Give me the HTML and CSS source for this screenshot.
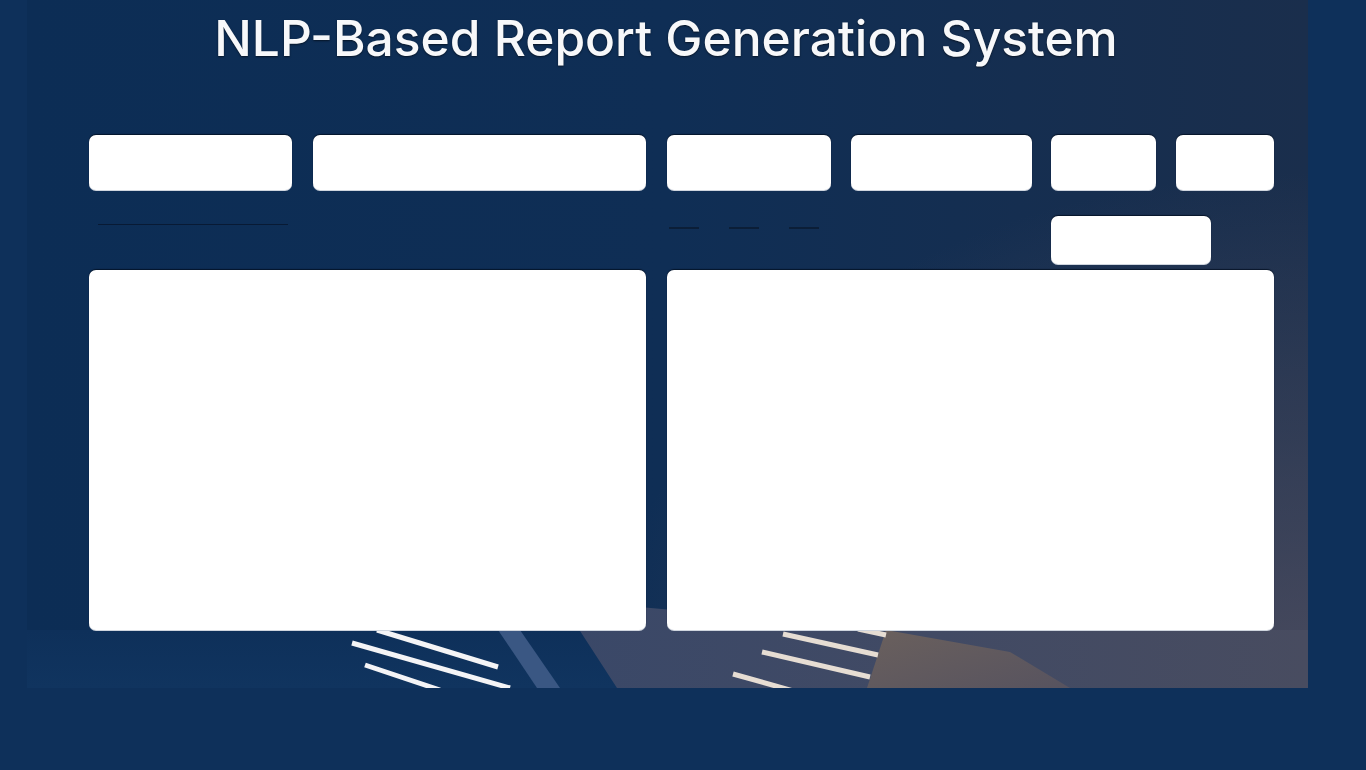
FILE: index.html
```html
<!DOCTYPE html>
<html lang="en">
<head>
<meta charset="utf-8">
<title>NLP-Based Report Generation System</title>
<link rel="stylesheet" href="styles.css">
</head>
<body>
<div class="frame">
  <svg class="art" width="1281" height="688" viewBox="27 0 1281 688" aria-hidden="true">
    <defs>
      <linearGradient id="grey" x1="0" y1="0" x2="1" y2="0">
        <stop offset="0" stop-color="#3a4868"/>
        <stop offset="1" stop-color="#484c60"/>
      </linearGradient>
      <linearGradient id="tan" x1="0" y1="0" x2="1" y2="1">
        <stop offset="0" stop-color="#6a605d"/>
        <stop offset="1" stop-color="#57535f"/>
      </linearGradient>
      <linearGradient id="bluefloor" x1="0" y1="0" x2="0" y2="1">
        <stop offset="0" stop-color="#0e305a"/>
        <stop offset="1" stop-color="#10345f"/>
      </linearGradient>
    </defs>
    <rect x="27" y="630" width="600" height="58" fill="url(#bluefloor)"/>
    <polygon points="560,600 900,630 1308,630 1308,688 617,688" fill="url(#grey)"/>
    <polygon points="886,630 1010,652 1070,688 867,688" fill="url(#tan)"/>
    <polygon points="498,630 520,630 560,688 537,688" fill="#3a5783"/>
    <g stroke="#f4f4f6" stroke-width="5">
      <line x1="377" y1="630" x2="498" y2="667"/>
      <line x1="352" y1="643" x2="510" y2="688"/>
      <line x1="365" y1="665" x2="440" y2="690"/>
    </g>
    <g stroke="#e6ddd3" stroke-width="5">
      <line x1="783" y1="634" x2="878" y2="655"/>
      <line x1="762" y1="652" x2="870" y2="677"/>
      <line x1="733" y1="674" x2="797" y2="692"/>
      <line x1="858" y1="629" x2="886" y2="635"/>
    </g>
  </svg>

  <h1 class="title">NLP-Based Report Generation System</h1>

  <div class="toolbar">
    <div class="box w1"></div>
    <div class="box w2"></div>
    <div class="box w3"></div>
    <div class="box w4"></div>
    <div class="box w5"></div>
    <div class="box w6"></div>
  </div>

  <div class="subrow">
    <div class="sub-left"><span class="rule"></span></div>
    <div class="sub-right">
      <span class="dashes"></span>
      <div class="box action"></div>
    </div>
  </div>

  <div class="panels">
    <div class="box panel-left"></div>
    <div class="box panel-right"></div>
  </div>
</div>
</body>
</html>
```

FILE: styles.css
```css
html, body {
  margin: 0;
  padding: 0;
}

body {
  background: #0e305a;
  width: 1366px;
  height: 770px;
  overflow: hidden;
  font-family: Inter, "Noto Sans", sans-serif;
}

.frame {
  position: relative;
  margin-left: 27px;
  width: 1281px;
  height: 688px;
  box-sizing: border-box;
  padding: 0 34px 0 62px;
  display: flex;
  flex-direction: column;
  background:
    radial-gradient(ellipse 55% 75% at 100% 100%, rgba(88, 84, 100, 0.75), rgba(88, 84, 100, 0) 100%),
    linear-gradient(to right, #0c2d55 0%, #0f2e55 50%, #1a2e4c 100%);
}

.art {
  position: absolute;
  left: 0;
  top: 0;
  z-index: 0;
}

.title,
.toolbar,
.subrow,
.panels {
  position: relative;
  z-index: 1;
}

.title {
  margin: 0 -34px 0 -62px;
  height: 135px;
  box-sizing: border-box;
  padding-top: 8px;
  padding-right: 3px;
  text-align: center;
  color: #f7f8fa;
  font-size: 49.7px;
  font-weight: 500;
  line-height: 60px;
  letter-spacing: 0;
  text-shadow: 0 1px 2px rgba(0, 0, 0, 0.55);
}

.box {
  background: #ffffff;
  border-radius: 7px;
  box-shadow: 0 -1px 1px rgba(2, 12, 30, 0.75), 0 1px 0 #cfd5de;
}

.toolbar {
  display: flex;
  height: 55px;
}

.w1 { width: 203px; }
.w2 { width: 333px; margin-left: 21px; }
.w3 { width: 164px; margin-left: 21px; }
.w4 { width: 181px; margin-left: 20px; }
.w5 { width: 105px; margin-left: 19px; }
.w6 { width: 98px;  margin-left: 20px; }

.subrow {
  display: flex;
  height: 80px;
}

.sub-left {
  width: 557px;
  padding-top: 34px;
  padding-left: 9px;
  box-sizing: border-box;
}

.rule {
  display: block;
  width: 190px;
  height: 1px;
  background: #081a34;
}

.sub-right {
  margin-left: 21px;
  flex: 1;
  display: flex;
  align-items: flex-start;
}

.dashes {
  display: block;
  margin-top: 37px;
  margin-left: 2px;
  width: 170px;
  height: 2px;
  background: repeating-linear-gradient(to right, #0a1a30 0 30px, transparent 30px 60px);
  opacity: 0.8;
}

.action {
  margin-top: 26px;
  margin-left: 212px;
  width: 160px;
  height: 48px;
}

.panels {
  display: flex;
  height: 360px;
}

.panel-left {
  width: 557px;
}

.panel-right {
  width: 607px;
  margin-left: 21px;
}
```
